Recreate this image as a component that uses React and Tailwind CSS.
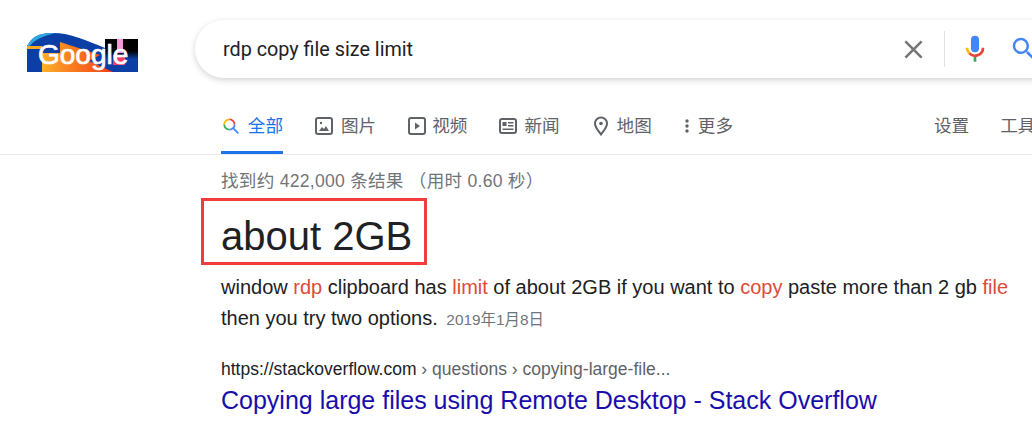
function GoogleDoodle() {
  return (
    <div className="relative w-[111px] h-[39px] shrink-0 overflow-hidden">
      <svg width="111" height="39" viewBox="0 0 111 39" className="block">
        <defs>
          <linearGradient id="blackFade" x1="0" y1="0" x2="0" y2="1">
            <stop offset="0.6" stopColor="#000" />
            <stop offset="1" stopColor="#0b3fa6" />
          </linearGradient>
          <linearGradient id="orangeFade" x1="0" y1="0" x2="1" y2="0">
            <stop offset="0" stopColor="#fbb02c" />
            <stop offset="0.45" stopColor="#f9791f" />
            <stop offset="1" stopColor="#f23f16" />
          </linearGradient>
        </defs>
        <path d="M0 39V13C5 5 10 0 25 0C45 0 60 8 78 15V6H111V39Z" fill="#0b3fa6" />
        <path d="M0 13C5 5 10 0 25 0C30 0 24 1 18 3C10 6 6 9 3 13Z" fill="#2ea7df" />
        <rect x="0" y="13" width="15" height="3" fill="#f6a623" />
        <path d="M15 39V20H33V9L73 22L62 28L86 39Z" fill="url(#orangeFade)" />
        <rect x="78" y="6" width="33" height="20" fill="url(#blackFade)" />
        <rect x="90" y="6" width="6" height="14" fill="#f39ad6" />
        <rect x="86" y="22" width="12" height="10" fill="#f23f6a" />
      </svg>
      <span className="absolute left-[11px] top-[2px] text-white text-[28px] leading-[40px] [-webkit-text-stroke:0.7px_white]">Google</span>
    </div>
  );
}

function SearchBox() {
  return (
    <div className="ml-[57px] w-[900px] h-[58px] shrink-0 rounded-[29px] bg-white shadow-[0_2px_6px_rgba(32,33,36,0.2)] flex items-center pl-[28px]">
      <span className="text-[#202124] text-[19.8px] pt-[2px] font-['Roboto',sans-serif] w-[677px] shrink-0">rdp copy file size limit</span>
      <svg width="27" height="27" viewBox="0 0 24 24" className="shrink-0" fill="#757575">
        <path d="M20 5.6 18.4 4 12 10.4 5.6 4 4 5.6 10.4 12 4 18.4 5.6 20 12 13.6 18.4 20 20 18.4 13.6 12Z" />
      </svg>
      <div className="w-px h-[36px] bg-[#dfe1e5] ml-[17px] shrink-0" />
      <svg width="32" height="32" viewBox="0 0 24 24" className="ml-[14px] shrink-0" fill="none">
        <rect x="9" y="2" width="6" height="12.5" rx="3" fill="#4285f4" />
        <path d="M6 11a6 6 0 0 0 1.8 4.3" stroke="#fbbc05" strokeWidth="2" />
        <path d="M7.8 15.3A6 6 0 0 0 18 11" stroke="#ea4335" strokeWidth="2" />
        <rect x="11" y="18" width="2" height="3.5" fill="#34a853" />
      </svg>
      <svg width="30" height="30" viewBox="0 0 24 24" className="ml-[18px] shrink-0" fill="#4285f4">
        <path d="M15.5 14h-.79l-.28-.27A6.47 6.47 0 0 0 16 9.5 6.5 6.5 0 1 0 9.5 16c1.61 0 3.09-.59 4.23-1.57l.27.28v.79l5 4.99L20.49 19l-4.99-5zm-6 0C7.01 14 5 11.99 5 9.5S7.01 5 9.5 5 14 7.01 14 9.5 11.99 14 9.5 14z" />
      </svg>
    </div>
  );
}

function Tab({ icon, label, active, className }) {
  return (
    <div className={`flex items-center h-[46px] shrink-0 text-[17.6px] ${active ? "text-[#1a73e8] border-b-[3px] border-[#1a73e8] pb-[7px]" : "text-[#5f6368] pb-[10px]"} ${className}`}>
      {icon}
      <span>{label}</span>
    </div>
  );
}

const allIcon = (
  <svg width="18" height="18" viewBox="0 0 24 24" className="ml-[1px] mr-[8px]" fill="none" strokeWidth="2.4">
    <path d="M3 10a7 7 0 0 1 7-7" stroke="#fbbc05" />
    <path d="M10 3a7 7 0 0 1 7 7" stroke="#ea4335" />
    <path d="M17 10a7 7 0 0 1-7 7" stroke="#4285f4" />
    <path d="M10 17a7 7 0 0 1-7-7" stroke="#34a853" />
    <path d="M15 15l7 7" stroke="#4285f4" />
  </svg>
);
const imageIcon = (
  <svg width="18" height="18" viewBox="0 0 18 18" className="mr-[8px]" fill="none">
    <rect x="1" y="1" width="16" height="16" rx="2" stroke="#5f6368" strokeWidth="2" />
    <path d="M4 14l3-4 2 2 2-3 3 5z" fill="#5f6368" />
    <circle cx="6" cy="6" r="1.2" fill="#5f6368" />
  </svg>
);
const videoIcon = (
  <svg width="18" height="18" viewBox="0 0 18 18" className="mr-[6px]" fill="none">
    <rect x="1" y="1" width="16" height="16" rx="2" stroke="#5f6368" strokeWidth="2" />
    <path d="M7 5.5v7l5-3.5z" fill="#5f6368" />
  </svg>
);
const newsIcon = (
  <svg width="18" height="16" viewBox="0 0 18 16" className="mr-[7px]" fill="none">
    <rect x="1" y="1" width="16" height="14" rx="2" stroke="#5f6368" strokeWidth="2" />
    <path d="M3.5 4h4v4h-4zM9 4h5.5v1.5H9zM9 7h5.5v1.5H9zM3.5 10.5h11V12h-11z" fill="#5f6368" />
  </svg>
);
const mapIcon = (
  <svg width="16" height="20" viewBox="0 0 16 20" className="mr-[8px]" fill="none">
    <path d="M8 18.5C5 14.5 2 11.3 2 7.5a6 6 0 0 1 12 0c0 3.8-3 7-6 11z" stroke="#5f6368" strokeWidth="2" />
    <circle cx="8" cy="7.5" r="1.8" fill="#5f6368" />
  </svg>
);
const moreIcon = (
  <svg width="4" height="14" viewBox="0 0 4 14" className="mr-[9px]" fill="#5f6368">
    <circle cx="2" cy="2" r="1.7" />
    <circle cx="2" cy="7" r="1.7" />
    <circle cx="2" cy="12" r="1.7" />
  </svg>
);

export default function App() {
  return (
    <div className="w-[1032px] h-[427px] overflow-hidden bg-white font-['Liberation_Sans','Noto_Sans_CJK_SC',sans-serif]">
      <header className="flex items-center pt-[20px] pl-[27px]">
        <div className="mt-[7px]">
          <GoogleDoodle />
        </div>
        <SearchBox />
      </header>

      <nav className="mt-[30px] h-[47px] border-b border-[#ebebeb] flex items-end pl-[221px] whitespace-nowrap">
        <Tab icon={allIcon} label="全部" active className="w-[62px]" />
        <Tab icon={imageIcon} label="图片" className="ml-[32px]" />
        <Tab icon={videoIcon} label="视频" className="ml-[32px]" />
        <Tab icon={newsIcon} label="新闻" className="ml-[32px]" />
        <Tab icon={mapIcon} label="地图" className="ml-[33px]" />
        <Tab icon={moreIcon} label="更多" className="ml-[33px]" />
        <Tab label="设置" className="ml-[201px]" />
        <Tab label="工具" className="ml-[31px]" />
      </nav>

      <main className="pl-[201px]">
        <p className="pl-[20px] mt-[14px] text-[#70757a] text-[17.6px] leading-[24px] tracking-[0.25px] whitespace-nowrap">找到约 422,000 条结果 （用时 0.60 秒）</p>
        <div className="mt-[5px] w-[226px] h-[67px] border-[3px] border-[#f23c3c] pl-[17px] flex items-center">
          <span className="text-[#202124] text-[40px] leading-[48px] pt-[8px] whitespace-nowrap">about 2GB</span>
        </div>
        <div className="pl-[20px]">
          <p className="mt-[7px] text-[20px] leading-[31px] text-[#202124] whitespace-nowrap">
            window <span className="text-[#dd4b39]">rdp</span> clipboard has <span className="text-[#dd4b39]">limit</span> of about 2GB if you want to <span className="text-[#dd4b39]">copy</span> paste more than 2 gb <span className="text-[#dd4b39]">file</span>
            <br />
            then you try two options. <span className="text-[#70757a] text-[15.4px] ml-[3px]">2019年1月8日</span>
          </p>
          <p className="mt-[23px] text-[17.5px] leading-[22px] text-[#202124] whitespace-nowrap">
            https://stackoverflow.com <span className="text-[#5f6368]">› questions › copying-large-file...</span>
          </p>
          <a className="block mt-[5px] text-[#1a0dab] text-[25px] leading-[30px] whitespace-nowrap">Copying large files using Remote Desktop - Stack Overflow</a>
        </div>
      </main>
    </div>
  );
}
